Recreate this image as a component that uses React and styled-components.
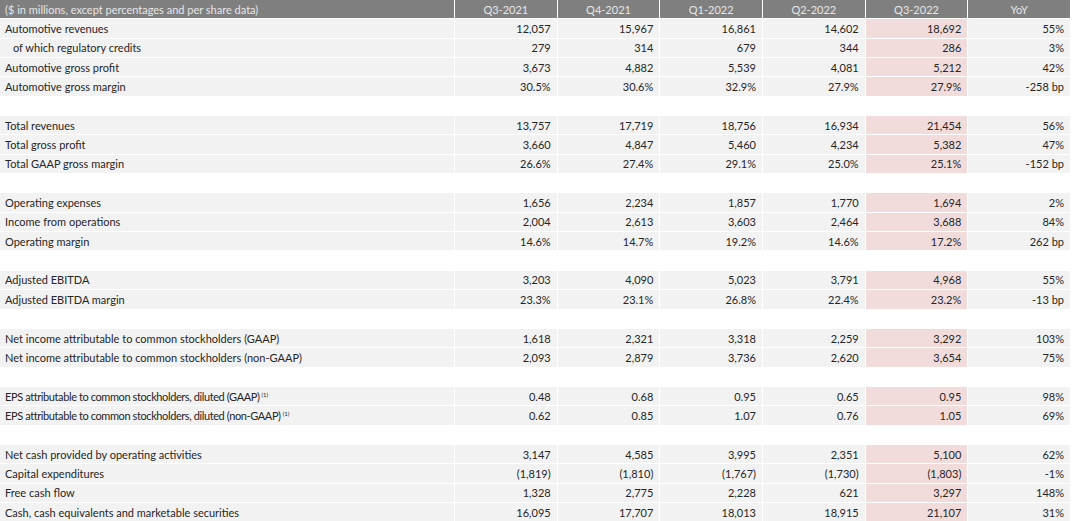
import { createGlobalStyle, styled } from "styled-components";

const GlobalStyle = createGlobalStyle`
  html, body {
    margin: 0;
    padding: 0;
    background: #ffffff;
  }
  body {
    font-family: Lato, "Open Sans", sans-serif;
    color: #262626;
    overflow: hidden;
  }
`;

const periods = ["Q3-2021", "Q4-2021", "Q1-2022", "Q2-2022", "Q3-2022", "YoY"];

const groups = [
  [
    ["Automotive revenues", "12,057", "15,967", "16,861", "14,602", "18,692", "55%"],
    ["of which regulatory credits", "279", "314", "679", "344", "286", "3%", true],
    ["Automotive gross profit", "3,673", "4,882", "5,539", "4,081", "5,212", "42%"],
    ["Automotive gross margin", "30.5%", "30.6%", "32.9%", "27.9%", "27.9%", "-258 bp"],
  ],
  [
    ["Total revenues", "13,757", "17,719", "18,756", "16,934", "21,454", "56%"],
    ["Total gross profit", "3,660", "4,847", "5,460", "4,234", "5,382", "47%"],
    ["Total GAAP gross margin", "26.6%", "27.4%", "29.1%", "25.0%", "25.1%", "-152 bp"],
  ],
  [
    ["Operating expenses", "1,656", "2,234", "1,857", "1,770", "1,694", "2%"],
    ["Income from operations", "2,004", "2,613", "3,603", "2,464", "3,688", "84%"],
    ["Operating margin", "14.6%", "14.7%", "19.2%", "14.6%", "17.2%", "262 bp"],
  ],
  [
    ["Adjusted EBITDA", "3,203", "4,090", "5,023", "3,791", "4,968", "55%"],
    ["Adjusted EBITDA margin", "23.3%", "23.1%", "26.8%", "22.4%", "23.2%", "-13 bp"],
  ],
  [
    ["Net income attributable to common stockholders (GAAP)", "1,618", "2,321", "3,318", "2,259", "3,292", "103%"],
    ["Net income attributable to common stockholders (non-GAAP)", "2,093", "2,879", "3,736", "2,620", "3,654", "75%"],
  ],
  [
    ["EPS attributable to common stockholders, diluted (GAAP)", "0.48", "0.68", "0.95", "0.65", "0.95", "98%", false, true],
    ["EPS attributable to common stockholders, diluted (non-GAAP)", "0.62", "0.85", "1.07", "0.76", "1.05", "69%", false, true],
  ],
  [
    ["Net cash provided by operating activities", "3,147", "4,585", "3,995", "2,351", "5,100", "62%"],
    ["Capital expenditures", "(1,819)", "(1,810)", "(1,767)", "(1,730)", "(1,803)", "-1%"],
    ["Free cash flow", "1,328", "2,775", "2,228", "621", "3,297", "148%"],
    ["Cash, cash equivalents and marketable securities", "16,095", "17,707", "18,013", "18,915", "21,107", "31%"],
  ],
];

const App = () => {
  return (
    <>
      <GlobalStyle />
      <Table>
        <Row>
          <HeadCell $left>($ in millions, except percentages and per share data)</HeadCell>
          {periods.map((p) => (
            <HeadCell key={p}>{p}</HeadCell>
          ))}
        </Row>
        {groups.map((rows, gi) => (
          <Group key={gi}>
            {gi > 0 && <Spacer />}
            {rows.map(([label, ...rest]) => {
              const values = rest.slice(0, 6);
              const indent = rest[6];
              const note = rest[7];
              return (
                <Row key={label}>
                  <Label $indent={indent} $tight={note}>
                    {label}
                    {note && <Note>(1)</Note>}
                  </Label>
                  {values.map((v, i) => (
                    <Value key={i} $pink={i === 4}>
                      {v}
                    </Value>
                  ))}
                </Row>
              );
            })}
          </Group>
        ))}
      </Table>
    </>
  );
};

const Table = styled.div`
  width: 1070px;
  display: flex;
  flex-direction: column;
  gap: 1px;
  font-size: 11px;
`;

const Group = styled.div`
  display: flex;
  flex-direction: column;
  gap: 1px;
`;

const Row = styled.div`
  display: grid;
  grid-template-columns: 454px repeat(6, 1fr);
  column-gap: 1px;
  height: 18.35px;
  background: #ffffff;
`;

const Spacer = styled.div`
  height: 18.35px;
`;

const Cell = styled.div`
  display: flex;
  align-items: center;
  white-space: nowrap;
  background: #f2f2f2;
`;

const HeadCell = styled(Cell)`
  background: #7f7f7f;
  color: #e6e6e6;
  justify-content: ${(p) => (p.$left ? "flex-start" : "center")};
  padding-left: ${(p) => (p.$left ? "5px" : "0")};
`;

const Label = styled(Cell)`
  padding-left: ${(p) => (p.$indent ? "13px" : "5px")};
  letter-spacing: ${(p) => (p.$tight ? "-0.4px" : "normal")};
`;

const Note = styled.sup`
  font-size: 6px;
  line-height: 0;
  margin-left: 2px;
  letter-spacing: 0;
  position: relative;
  top: -1px;
`;

const Value = styled(Cell)`
  justify-content: flex-end;
  padding-right: 6px;
  background: ${(p) => (p.$pink ? "#f2dcdb" : "#f2f2f2")};
`;

export default App;
